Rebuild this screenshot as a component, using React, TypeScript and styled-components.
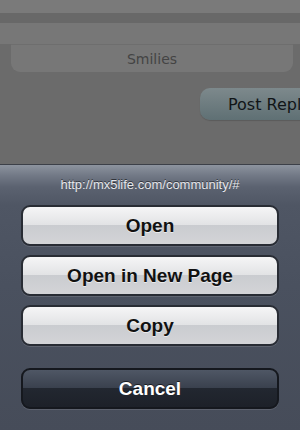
import { FC } from "react";
import styled, { createGlobalStyle } from "styled-components";

const GlobalStyle = createGlobalStyle`
  html, body {
    margin: 0;
    padding: 0;
    background: #6b6b6b;
  }
  * {
    box-sizing: border-box;
  }
`;

interface IButtonProps {
  variant?: "default" | "cancel";
}

const Screen = styled.div`
  width: 300px;
  height: 430px;
  display: flex;
  flex-direction: column;
  overflow: hidden;
  background: #6b6b6b;
`;

const DimmedPage = styled.div`
  height: 164px;
  flex-shrink: 0;
  display: flex;
  flex-direction: column;
  background: #6b6b6b;
  overflow: hidden;
`;

const Band = styled.div<{ h: number; color: string }>`
  height: ${({ h }) => h}px;
  background: ${({ color }) => color};
  flex-shrink: 0;
`;

const SmiliesBox = styled.div`
  margin: 0 7px 0 11px;
  height: 28px;
  background: #777777;
  border-radius: 0 0 9px 9px;
  display: flex;
  align-items: center;
  justify-content: center;
  font-family: "DejaVu Sans", Verdana, sans-serif;
  font-size: 14px;
  color: #444444;
  border-top: 1px solid #6e6e6e;
`;

const ReplyRow = styled.div`
  display: flex;
  justify-content: flex-end;
  margin-top: 16px;
`;

const PostReplyButton = styled.div`
  width: 120px;
  height: 32px;
  margin-right: -20px;
  border-radius: 10px;
  background: linear-gradient(#7d898c, #5f7074);
  display: flex;
  align-items: center;
  padding-left: 28px;
  font-family: "DejaVu Sans", Verdana, sans-serif;
  font-size: 16px;
  white-space: nowrap;
  color: #111517;
  box-shadow: 0 1px 1px rgba(0, 0, 0, 0.15);
`;

const ActionSheet = styled.div`
  flex: 1;
  display: flex;
  flex-direction: column;
  padding: 0 21px;
  border-top: 1px solid #3c4048;
  background: linear-gradient(
    #8d949f 0px,
    #737a87 10px,
    #5b6270 22px,
    #4f5664 40px,
    #4a515f 120px,
    #464c59 266px
  );
`;

const UrlTitle = styled.div`
  margin-top: 12px;
  height: 16px;
  text-align: center;
  font-family: "Liberation Sans", Arial, sans-serif;
  font-size: 13px;
  color: #e6e8ec;
  text-shadow: 0 -1px 0 rgba(0, 0, 0, 0.55);
  margin-bottom: 12px;
`;

const SheetButton = styled.div<IButtonProps>`
  height: 41px;
  border-radius: 9px;
  border: 2px solid ${({ variant }) => (variant === "cancel" ? "#15181e" : "#282c34")};
  margin-bottom: ${({ variant }) => (variant === "cancel" ? "0" : "9px")};
  display: flex;
  align-items: center;
  justify-content: center;
  font-family: "Liberation Sans", Arial, sans-serif;
  font-weight: bold;
  font-size: 19px;
  box-shadow: 0 1px 0 rgba(255, 255, 255, 0.12);
  background: ${({ variant }) =>
    variant === "cancel"
      ? "linear-gradient(#4f5765 0%, #3a414e 48%, #222730 50%, #1d2129 100%)"
      : "linear-gradient(#f5f5f6 0%, #e2e3e5 48%, #caccd0 50%, #d3d4d7 100%)"};
  color: ${({ variant }) => (variant === "cancel" ? "#ffffff" : "#111111")};
  text-shadow: ${({ variant }) =>
    variant === "cancel"
      ? "0 -1px 0 rgba(0, 0, 0, 0.6)"
      : "0 1px 0 rgba(255, 255, 255, 0.6)"};
`;

const Spacer = styled.div`
  height: 13px;
`;

const actions = ["Open", "Open in New Page", "Copy"];

const App: FC = () => {
  return (
    <Screen>
      <GlobalStyle />
      <DimmedPage>
        <Band h={13} color="#7a7a7a" />
        <Band h={10} color="#686868" />
        <Band h={21} color="#777777" />
        <SmiliesBox>Smilies</SmiliesBox>
        <ReplyRow>
          <PostReplyButton>Post Reply</PostReplyButton>
        </ReplyRow>
      </DimmedPage>
      <ActionSheet>
        <UrlTitle>http://mx5life.com/community/#</UrlTitle>
        {actions.map((label) => (
          <SheetButton key={label}>{label}</SheetButton>
        ))}
        <Spacer />
        <SheetButton variant="cancel">Cancel</SheetButton>
      </ActionSheet>
    </Screen>
  );
};

export default App;
